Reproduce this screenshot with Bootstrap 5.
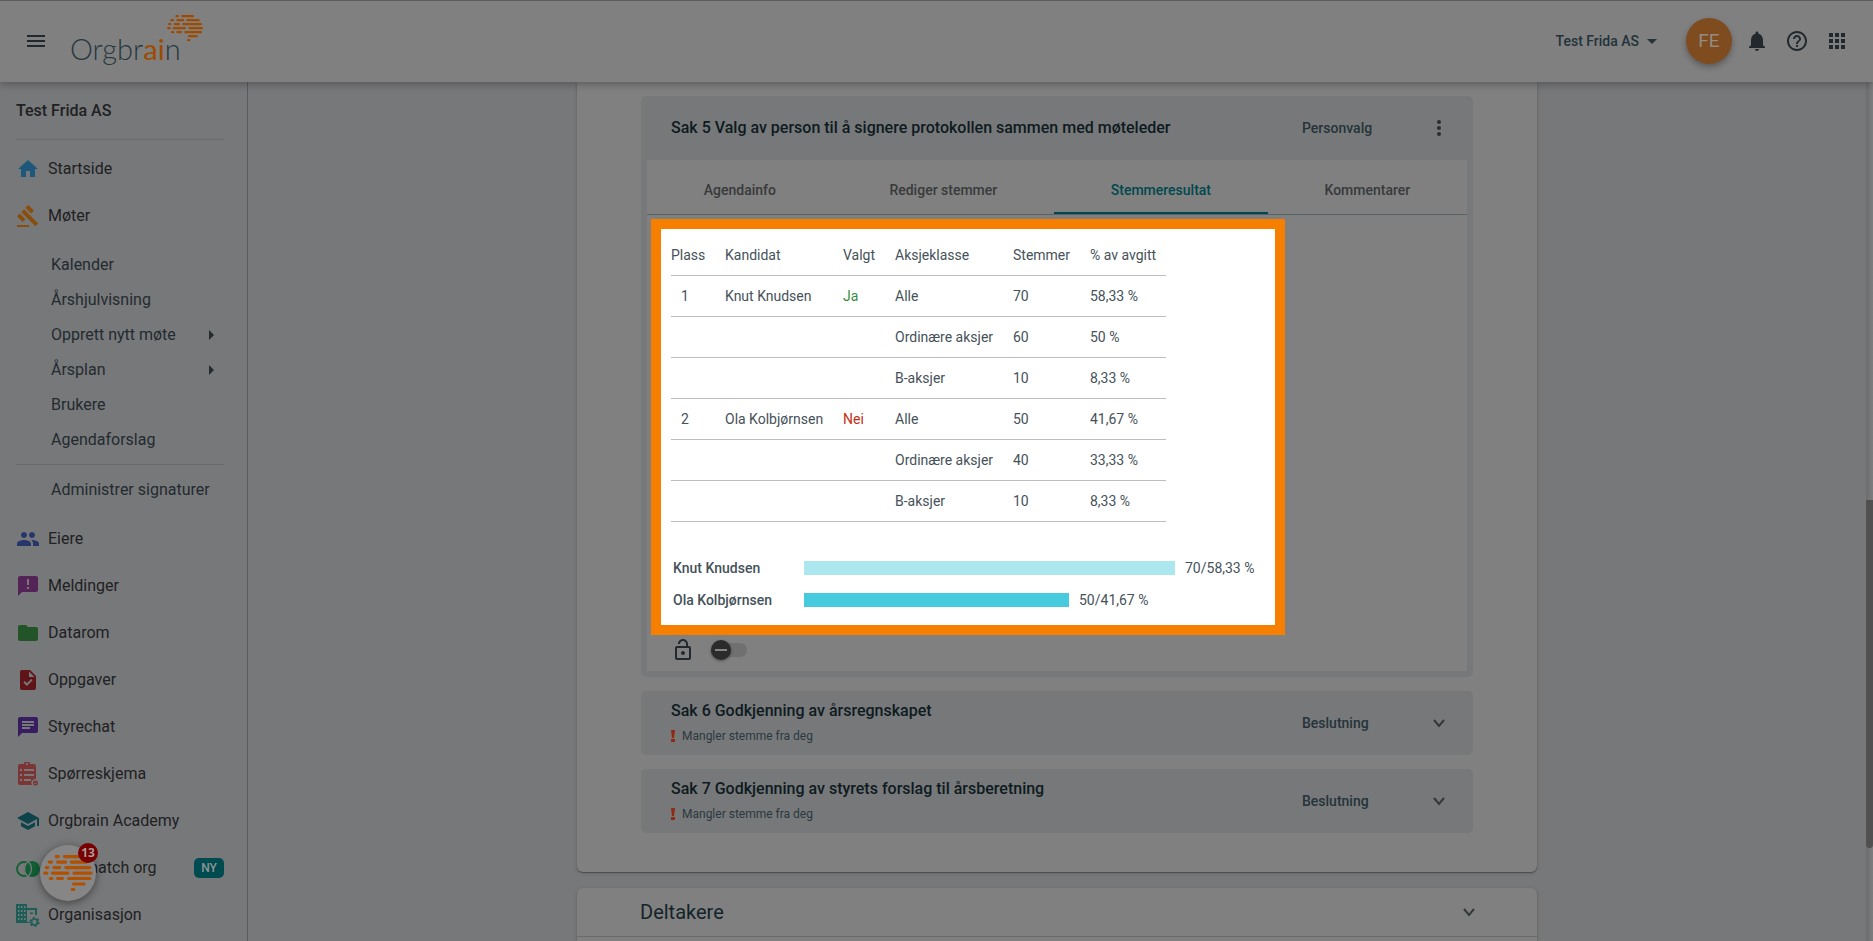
<!DOCTYPE html>
<html lang="no">
<head>
<meta charset="utf-8">
<meta name="viewport" content="width=device-width, initial-scale=1">
<title>Orgbrain</title>
<link href="https://cdn.jsdelivr.net/npm/bootstrap@5.3.0/dist/css/bootstrap.min.css" rel="stylesheet">
<script src="https://cdn.jsdelivr.net/npm/bootstrap@5.3.0/dist/js/bootstrap.bundle.min.js" defer></script>
<style>
  :root { --surface: #808080; --canvas: #77787a; --ink: #232b2f; --ink-strong: #0e1b20; --teal: #00484e; --line: #696b6d; --orange: #f77f00; }
  body { font-family: Roboto, "Liberation Sans", sans-serif; font-size: 14px; line-height: 20px; background: var(--canvas); color: var(--ink); }
  a { color: inherit; text-decoration: none; }
  svg { display: block; flex: none; }
  .icon-btn { border: 0; padding: 0; background: none; color: inherit; }
  .ico { width: 24px; height: 24px; fill: currentColor; }

  .topbar { height: 82px; background: var(--surface); box-shadow: inset 0 1px 0 #5c5c5c, 0 2px 8px rgba(0, 0, 0, .3); z-index: 10; padding: 0 24px; color: #22292e; }
  .brand { font-family: Lato, sans-serif; font-weight: 300; font-size: 29px; line-height: 40px; color: #26383f; position: relative; margin: 16px 0 0 22px; }
  .brand b { font-weight: 400; color: #9c4c00; }
  .brand-mark { position: absolute; left: 97px; top: -14px; width: 36px; height: 27px; fill: #a04a00; }
  .avatar { width: 46px; height: 46px; margin: 0 13px 0 29px; background: #7f4c1f; color: #948a80; font-size: 19px; box-shadow: 0 3px 6px rgba(0, 0, 0, .3); }
  .org-pick { font-weight: 500; color: #22333a; }

  .sidebar { width: 248px; padding: 0 15px 0 16px; border-right: 1px solid #595c5e; }
  .side-title { height: 57px; font-size: 16px; font-weight: 500; color: #202122; margin: 0; }
  .side-rule { height: 1px; margin: 0 8px 5px 0; background: var(--line); }
  .sub-rule { margin-top: 7px; margin-bottom: 7px; }
  .nav-row { height: 47px; font-size: 16px; gap: 8px; color: #202122; }
  .sub-row { height: 35px; font-size: 16px; padding-left: 35px; padding-right: 10px; }
  .new-tag { width: 30px; height: 20px; border-radius: 5px; background: #004b50; color: #8c9495; font-size: 12px; font-weight: 500; }

  .sheet { width: 100%; max-width: 960px; background: var(--surface); box-shadow: 0 1px 1px #4c4c4c, 0 1px 4px rgba(0, 0, 0, .15); }
  .sheet-agenda { gap: 14px; padding: 14px 64px 39px; border-radius: 0 0 6px 6px; }
  .sheet-people { border-radius: 6px 6px 0 0; }
  .sheet-people header { height: 49px; padding: 0 56px 0 63px; border-bottom: 1px solid var(--line); }
  .sheet-people h2 { font-size: 20px; line-height: 24px; font-weight: 400; margin: 0; color: #13242a; }
  .case { background: var(--canvas); border-radius: 5px; }
  .case-open { padding-bottom: 6px; }
  .case-head { height: 64px; padding: 0 22px 0 30px; }
  .case-head h3 { font-size: 16px; line-height: 24px; font-weight: 500; margin: 0; color: var(--ink-strong); }
  .case-kind { width: 125px; font-weight: 500; color: #253439; }
  .case-note { font-size: 12px; line-height: 24px; gap: 7px; margin-top: 1px; color: #2b393f; }
  .case-body { margin: 0 6px; padding-bottom: 10px; background: var(--surface); }
  .chev { width: 24px; height: 24px; fill: none; stroke: #33383b; stroke-width: 2; }

  .case-tabs { height: 55px; border-bottom: 1px solid #566264; }
  .case-tabs .nav-link { padding: 8px 0 0; border: 0; border-bottom: 2px solid transparent; border-radius: 0; background: none; color: #383a3b; font-weight: 500; }
  .case-tabs .nav-link.active { color: var(--teal); border-bottom-color: var(--teal); }

  .result { max-width: 634px; margin: 4px 4px 0; border: 10px solid var(--orange); background: #fff; padding: 6px 0 9px 10px; color: #45525a; }
  .votes { width: 495px; table-layout: fixed; border-collapse: separate; border-spacing: 0; }
  .votes th, .votes td { height: 41px; padding: 0; font-weight: 400; border-bottom: 1px solid #bdbdbd; white-space: nowrap; }
  .votes td:first-child { padding-left: 10px; }
  .yes { color: #388e3c; }
  .no { color: #c62f12; }
  .bars { margin-top: 30px; padding-left: 2px; }
  .bar-row { height: 32px; gap: 10px; }
  .bar-name { width: 121px; font-weight: 500; }
  .bar-fill { height: 14px; background: #ace7f0; }
  .bar-fill.second { background: #45cbdd; }

  .lock-row { height: 26px; padding: 4px 0 0 24px; gap: 16px; }
  .tri-switch { appearance: none; position: relative; width: 36px; height: 14px; margin: 0; border-radius: 7px; background: #707070; }
  .tri-switch::before { content: ""; position: absolute; left: 0; top: -3px; width: 20px; height: 20px; border-radius: 50%; background: linear-gradient(#858585, #858585) center / 12px 2px no-repeat #2b2b2b; box-shadow: 0 1px 3px rgba(0, 0, 0, .4); }

  .scroll-rail { width: 7px; background: linear-gradient(90deg, #6c6d6e, #7c7d7e); padding-top: 418px; }
  .scroll-thumb { height: 348px; background: #505050; border-radius: 0 0 4px 4px; }

  .helper { position: fixed; left: 40px; bottom: 40px; width: 56px; height: 56px; background: #868686; box-shadow: 0 2px 8px rgba(0, 0, 0, .45); z-index: 20; }
  .helper svg { width: 50px; height: 37px; fill: #b35000; }
  .helper-count { position: absolute; right: -2px; top: -2px; width: 20px; height: 20px; background: #780000; color: #a9a0a0; font: 700 12px/20px "Open Sans", sans-serif; }
</style>
</head>
<body class="vh-100 d-flex flex-column overflow-hidden">

<svg width="0" height="0" class="position-absolute" aria-hidden="true">
  <symbol id="brain" viewBox="0 0 108 81">
    <rect x="25" y="0" width="11" height="7" rx="3"/><rect x="43" y="0" width="38" height="7" rx="3"/>
    <rect x="10" y="12" width="11" height="7" rx="3"/><rect x="28" y="12" width="24" height="7" rx="3"/><rect x="58" y="12" width="40" height="7" rx="3"/>
    <rect x="3" y="24" width="10" height="7" rx="3"/><rect x="20" y="24" width="19" height="7" rx="3"/><rect x="46" y="24" width="59" height="7" rx="3"/>
    <rect x="0" y="36" width="11" height="7" rx="3"/><rect x="17" y="36" width="40" height="7" rx="3"/><rect x="64" y="36" width="44" height="7" rx="3"/>
    <rect x="12" y="48" width="10" height="7" rx="3"/><rect x="28" y="48" width="17" height="7" rx="3"/><rect x="52" y="48" width="53" height="7" rx="3"/>
    <rect x="63" y="60" width="29" height="7" rx="3"/><rect x="60" y="72" width="10" height="7" rx="3"/>
  </symbol>
  <symbol id="chevron" viewBox="0 0 24 24"><path d="M7 9l5 6 5-6"/></symbol>
  <symbol id="right" viewBox="0 0 5 10"><path d="M0 0l5 5-5 5z"/></symbol>
</svg>

<header class="topbar d-flex align-items-center flex-shrink-0 position-relative">
  <button class="icon-btn" aria-label="Meny"><svg class="ico" viewBox="0 0 24 24"><path d="M3 18h18v-2H3v2zm0-5h18v-2H3v2zm0-7v2h18V6H3z"/></svg></button>
  <a href="#" class="brand">Orgbr<b>ai</b>n<svg class="brand-mark"><use href="#brain"/></svg></a>
  <div class="d-flex align-items-center ms-auto">
    <button class="icon-btn org-pick d-flex align-items-center">Test Frida AS<svg class="ms-2" width="10" height="5" viewBox="0 0 10 5" fill="currentColor"><path d="M0 0h10L5 5z"/></svg></button>
    <a href="#" class="avatar rounded-circle d-flex align-items-center justify-content-center">FE</a>
    <div class="d-flex gap-3">
      <button class="icon-btn" aria-label="Varsler"><svg class="ico" viewBox="0 0 24 24"><path d="M12 22c1.1 0 2-.9 2-2h-4c0 1.1.89 2 2 2zm6-6v-5c0-3.07-1.64-5.64-4.5-6.32V4c0-.83-.67-1.5-1.5-1.5s-1.5.67-1.5 1.5v.68C7.63 5.36 6 7.92 6 11v5l-2 2v1h16v-1l-2-2z"/></svg></button>
      <button class="icon-btn" aria-label="Hjelp"><svg class="ico" viewBox="0 0 24 24"><path d="M11 18h2v-2h-2v2zm1-16C6.48 2 2 6.48 2 12s4.48 10 10 10 10-4.48 10-10S17.52 2 12 2zm0 18c-4.41 0-8-3.59-8-8s3.59-8 8-8 8 3.59 8 8-3.59 8-8 8zm0-14c-2.21 0-4 1.79-4 4h2c0-1.1.9-2 2-2s2 .9 2 2c0 2-3 1.75-3 5h2c0-2.25 3-2.5 3-5 0-2.21-1.79-4-4-4z"/></svg></button>
      <button class="icon-btn" aria-label="Apper"><svg class="ico" viewBox="0 0 24 24"><path d="M4 8h4V4H4v4zm6 12h4v-4h-4v4zm-6 0h4v-4H4v4zm0-6h4v-4H4v4zm6 0h4v-4h-4v4zm6-10v4h4V4h-4zm-6 4h4V4h-4v4zm6 6h4v-4h-4v4zm0 6h4v-4h-4v4z"/></svg></button>
    </div>
  </div>
</header>

<div class="d-flex flex-grow-1 overflow-hidden">
  <nav class="sidebar flex-shrink-0">
    <h1 class="side-title d-flex align-items-center">Test Frida AS</h1>
    <div class="side-rule"></div>
    <a href="#" class="nav-row d-flex align-items-center"><svg class="ico" viewBox="0 0 24 24" color="#1d587b"><path d="M10 20v-6h4v6h5v-8h3L12 3 2 12h3v8z"/></svg>Startside</a>
    <a href="#" class="nav-row d-flex align-items-center"><svg class="ico" viewBox="0 0 24 24" color="#8a4d0c"><path d="M1 21h12v2H1zM5.245 8.07l2.83-2.827 14.14 14.142-2.828 2.828zM12.317 1l5.657 5.656-2.83 2.83-5.654-5.66zM3.825 9.485l5.657 5.657-2.828 2.828-5.657-5.657z"/></svg>Møter</a>
    <div class="py-2">
      <a href="#" class="sub-row d-flex align-items-center">Kalender</a>
      <a href="#" class="sub-row d-flex align-items-center">Årshjulvisning</a>
      <a href="#" class="sub-row d-flex align-items-center justify-content-between">Opprett nytt møte<svg class="me-2" width="5" height="10" fill="currentColor"><use href="#right"/></svg></a>
      <a href="#" class="sub-row d-flex align-items-center justify-content-between">Årsplan<svg class="me-2" width="5" height="10" fill="currentColor"><use href="#right"/></svg></a>
      <a href="#" class="sub-row d-flex align-items-center">Brukere</a>
      <a href="#" class="sub-row d-flex align-items-center">Agendaforslag</a>
      <div class="side-rule sub-rule"></div>
      <a href="#" class="sub-row d-flex align-items-center pe-0 text-nowrap">Administrer signaturer</a>
    </div>
    <a href="#" class="nav-row d-flex align-items-center"><svg class="ico" viewBox="0 0 24 24" color="#27376b"><path d="M16 11c1.66 0 2.99-1.34 2.99-3S17.66 5 16 5c-1.66 0-3 1.34-3 3s1.34 3 3 3zm-8 0c1.66 0 2.99-1.34 2.99-3S9.66 5 8 5C6.34 5 5 6.34 5 8s1.34 3 3 3zm0 2c-2.33 0-7 1.17-7 3.5V19h14v-2.5c0-2.33-4.67-3.5-7-3.5zm8 0c-.29 0-.62.02-.97.05 1.16.84 1.97 1.97 1.97 3.45V19h6v-2.5c0-2.33-4.67-3.5-7-3.5z"/></svg>Eiere</a>
    <a href="#" class="nav-row d-flex align-items-center"><svg class="ico" viewBox="0 0 24 24" color="#542458"><path d="M20 2H4c-1.1 0-1.99.9-1.99 2L2 22l4-4h14c1.1 0 2-.9 2-2V4c0-1.1-.9-2-2-2zm-7 13h-2v-2h2v2zm0-4h-2V5h2v6z"/></svg>Meldinger</a>
    <a href="#" class="nav-row d-flex align-items-center"><svg class="ico" viewBox="0 0 24 24" color="#235427"><path d="M10 4H4c-1.1 0-1.99.9-1.99 2L2 18c0 1.1.9 2 2 2h16c1.1 0 2-.9 2-2V8c0-1.1-.9-2-2-2h-8l-2-2z"/></svg>Datarom</a>
    <a href="#" class="nav-row d-flex align-items-center"><svg class="ico" viewBox="0 0 24 24" color="#5f1417"><path d="M14 2H6c-1.1 0-1.99.9-1.99 2L4 20c0 1.1.89 2 1.99 2H18c1.1 0 2-.9 2-2V8l-6-6zm-3.06 16L7.4 14.46l1.41-1.41 2.12 2.12 4.24-4.24 1.41 1.41L10.94 18zM13 9V3.5L18.5 9H13z"/></svg>Oppgaver</a>
    <a href="#" class="nav-row d-flex align-items-center"><svg class="ico" viewBox="0 0 24 24" color="#371c62"><path d="M20 2H4c-1.1 0-1.99.9-1.99 2L2 22l4-4h14c1.1 0 2-.9 2-2V4c0-1.1-.9-2-2-2zM6 9h12v2H6V9zm8 5H6v-2h8v2zm4-6H6V6h12v2z"/></svg>Styrechat</a>
    <a href="#" class="nav-row d-flex align-items-center"><svg class="ico" viewBox="0 0 24 24" color="#7c3535"><path fill-rule="evenodd" d="M4 2h4a3 3 0 0 1 6 0h4a2 2 0 0 1 2 2v13a4 4 0 0 0-4 6H4a2 2 0 0 1-2-2V4a2 2 0 0 1 2-2zm7-1a1 1 0 1 0 .01 0zM4 7v2h2V7zm4 0v2h10V7zM4 12v2h2v-2zm4 0v2h10v-2zM4 17v2h2v-2zm4 0v2h7v-2z"/><circle cx="19.500" cy="21" r="2.500"/><path d="M18.300 21l1 1 1.600-1.800" fill="none" stroke="#77787a" stroke-width=".8"/></svg>Spørreskjema</a>
    <a href="#" class="nav-row d-flex align-items-center"><svg class="ico" viewBox="0 0 24 24" color="#0d444c"><path d="M5 13.180v4L12 21l7-3.820v-4L12 17l-7-3.820zM12 3L1 9l11 6 9-4.910V17h2V9L12 3z"/></svg>Orgbrain Academy</a>
    <a href="#" class="nav-row d-flex align-items-center pe-2"><svg class="ico" viewBox="0 0 24 24" color="#125f36"><circle cx="8" cy="13" r="7" fill="none" stroke="currentColor" stroke-width="1.800"/><circle cx="16" cy="13" r="8"/><path d="M12 5.500a10 10 0 0 0 0 15M12 5.500a10 10 0 0 1 0 15" fill="none" stroke="#77787a" stroke-width="1.300"/></svg>Styrematch org<span class="new-tag ms-auto d-flex align-items-center justify-content-center">NY</span></a>
    <a href="#" class="nav-row d-flex align-items-center"><svg class="ico" viewBox="0 0 24 24" color="#1c5e57"><path fill-rule="evenodd" d="M0 1h11v4h10v7h-2V7h-8v12h3v1H0zm2 2v2h1.500V3zm3 0v2h1.500V3zm3 0v2h1.500V3zM2 7v2h1.500V7zm3 0v2h1.500V7zm3 0v2h1.500V7zM2 11v2h1.500v-2zm3 0v2h1.500v-2zm3 0v2h1.500v-2zM2 15v2h1.500v-2zm3 0v2h1.500v-2zm3 0v2h1.500v-2z"/><path d="M14 9.500h3v1.500h-3z"/><circle cx="18.500" cy="19" r="3" fill="none" stroke="currentColor" stroke-width="1.700"/><circle cx="18.500" cy="19" r="4.400" fill="none" stroke="currentColor" stroke-width="1.400" stroke-dasharray="2.300 2.300"/></svg>Organisasjon</a>
  </nav>

  <main class="flex-grow-1 d-flex flex-column align-items-center gap-3">
    <section class="sheet sheet-agenda d-flex flex-column">
      <article class="case case-open">
        <div class="case-head d-flex align-items-center">
          <h3 class="me-auto">Sak 5 Valg av person til å signere protokollen sammen med møteleder</h3>
          <span class="case-kind">Personvalg</span>
          <button class="icon-btn" aria-label="Flere valg"><svg class="ico" viewBox="0 0 24 24" color="#2b2f31"><circle cx="12" cy="6" r="2"/><circle cx="12" cy="12" r="2"/><circle cx="12" cy="18" r="2"/></svg></button>
        </div>
        <div class="case-body">
          <div class="case-tabs nav d-flex flex-nowrap" role="tablist">
            <button class="nav-link flex-fill" role="tab">Agendainfo</button>
            <button class="nav-link flex-fill" role="tab">Rediger stemmer</button>
            <button class="nav-link flex-fill active" role="tab" aria-selected="true">Stemmeresultat</button>
            <button class="nav-link flex-fill" role="tab">Kommentarer</button>
          </div>
          <div class="result">
            <table class="votes">
              <colgroup><col style="width:54px"><col style="width:118px"><col style="width:52px"><col style="width:118px"><col style="width:77px"><col></colgroup>
              <thead><tr><th>Plass</th><th>Kandidat</th><th>Valgt</th><th>Aksjeklasse</th><th>Stemmer</th><th>% av avgitt</th></tr></thead>
              <tbody>
                <tr><td>1</td><td>Knut Knudsen</td><td class="yes">Ja</td><td>Alle</td><td>70</td><td>58,33 %</td></tr>
                <tr><td></td><td></td><td></td><td>Ordinære aksjer</td><td>60</td><td>50 %</td></tr>
                <tr><td></td><td></td><td></td><td>B-aksjer</td><td>10</td><td>8,33 %</td></tr>
                <tr><td>2</td><td>Ola Kolbjørnsen</td><td class="no">Nei</td><td>Alle</td><td>50</td><td>41,67 %</td></tr>
                <tr><td></td><td></td><td></td><td>Ordinære aksjer</td><td>40</td><td>33,33 %</td></tr>
                <tr><td></td><td></td><td></td><td>B-aksjer</td><td>10</td><td>8,33 %</td></tr>
              </tbody>
            </table>
            <div class="bars">
              <div class="bar-row d-flex align-items-center"><span class="bar-name">Knut Knudsen</span><span class="bar-fill" style="width:371px"></span><span>70/58,33 %</span></div>
              <div class="bar-row d-flex align-items-center"><span class="bar-name">Ola Kolbjørnsen</span><span class="bar-fill second" style="width:265px"></span><span>50/41,67 %</span></div>
            </div>
          </div>
          <div class="lock-row d-flex align-items-center">
            <svg class="ico" viewBox="0 0 24 24" color="#22292e"><path d="M12 17c1.100 0 2-.9 2-2s-.9-2-2-2-2 .9-2 2 .9 2 2 2zm6-9h-1V6c0-2.760-2.240-5-5-5S7 3.240 7 6h1.900c0-1.710 1.390-3.100 3.100-3.100 1.710 0 3.100 1.390 3.100 3.100v2H6c-1.100 0-2 .9-2 2v10c0 1.100.9 2 2 2h12c1.100 0 2-.9 2-2V10c0-1.100-.9-2-2-2zm0 12H6V10h12v10z"/></svg>
            <input type="checkbox" class="tri-switch" role="switch" aria-label="Lås stemmer">
          </div>
        </div>
      </article>
      <article class="case case-head d-flex align-items-center">
        <div class="me-auto">
          <h3>Sak 6 Godkjenning av årsregnskapet</h3>
          <div class="case-note d-flex align-items-center"><svg width="4" height="12" fill="#8f2a10"><path d="M0 0h4l-1 8H1zM0 9h4v3H0z"/></svg>Mangler stemme fra deg</div>
        </div>
        <span class="case-kind">Beslutning</span>
        <button class="icon-btn" aria-label="Vis sak 6"><svg class="chev"><use href="#chevron"/></svg></button>
      </article>
      <article class="case case-head d-flex align-items-center">
        <div class="me-auto">
          <h3>Sak 7 Godkjenning av styrets forslag til årsberetning</h3>
          <div class="case-note d-flex align-items-center"><svg width="4" height="12" fill="#8f2a10"><path d="M0 0h4l-1 8H1zM0 9h4v3H0z"/></svg>Mangler stemme fra deg</div>
        </div>
        <span class="case-kind">Beslutning</span>
        <button class="icon-btn" aria-label="Vis sak 7"><svg class="chev"><use href="#chevron"/></svg></button>
      </article>
    </section>
    <section class="sheet sheet-people flex-grow-1">
      <header class="d-flex align-items-center justify-content-between">
        <h2>Deltakere</h2>
        <button class="icon-btn" aria-label="Vis deltakere"><svg class="chev"><use href="#chevron"/></svg></button>
      </header>
    </section>
  </main>
  <div class="scroll-rail flex-shrink-0" aria-hidden="true"><div class="scroll-thumb"></div></div>
</div>

<button class="helper icon-btn rounded-circle d-flex align-items-center justify-content-center" aria-label="Hjelpesenter">
  <svg><use href="#brain"/></svg>
  <span class="helper-count rounded-circle">13</span>
</button>
</body>
</html>
